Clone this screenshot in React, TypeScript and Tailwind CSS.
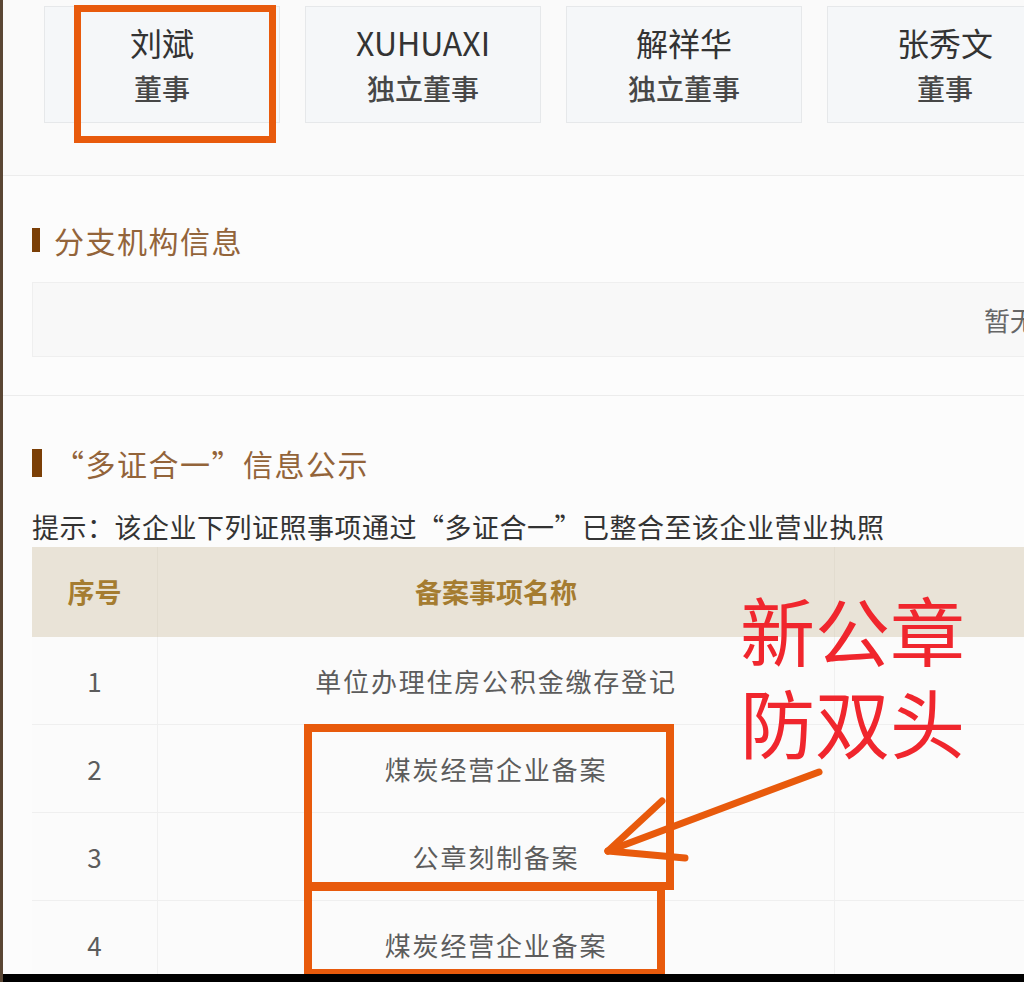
import React from "react";

const FONT = { fontFamily: '"Noto Sans CJK SC", "Noto Sans", sans-serif' };

const people = [
  { name: "刘斌", role: "董事" },
  { name: "XUHUAXI", role: "独立董事" },
  { name: "解祥华", role: "独立董事" },
  { name: "张秀文", role: "董事" },
];

const rows = [
  { no: "1", name: "单位办理住房公积金缴存登记" },
  { no: "2", name: "煤炭经营企业备案" },
  { no: "3", name: "公章刻制备案" },
  { no: "4", name: "煤炭经营企业备案" },
];

export default function App() {
  return (
    <div
      style={FONT}
      className="relative h-[982px] w-[1024px] overflow-hidden border-l-[3px] border-[#5a4634] bg-[#fafafa]"
    >
      {/* 董事卡片 */}
      <div className="h-[176px] border-b border-[#ececec] pl-[41px] pt-[6px]">
        <div className="flex gap-[25px]">
          {people.map((p) => (
            <div
              key={p.name}
              className="flex h-[117px] w-[236px] shrink-0 flex-col items-center border border-[#e6e8ea] bg-[#f5f7f9] pt-[14px]"
            >
              <span className="text-[32px] leading-[42px] text-[#333]">{p.name}</span>
              <span className="mt-[6px] text-[28px] leading-[38px] font-medium text-[#474747]">{p.role}</span>
            </div>
          ))}
        </div>
      </div>

      {/* 分支机构信息 */}
      <div className="h-[220px] border-b border-[#ececec] bg-[#fcfcfc] pl-[29px] pt-[49px]">
        <div className="flex h-[30px] items-center">
          <span className="h-[24px] w-[8px] bg-[#7b3f06]" />
          <span className="ml-[14px] text-[30px] leading-[30px] tracking-[1.5px] text-[#93643a]">分支机构信息</span>
        </div>
        <div className="mt-[27px] flex h-[75px] w-[1100px] items-center border border-[#efefef] bg-[#f8f8f8] pl-[951px]">
          <span className="whitespace-nowrap text-[26px] text-[#666]">暂无数据</span>
        </div>
      </div>

      {/* 多证合一 */}
      <div className="bg-[#fcfcfc] pl-[29px] pt-[52px]">
        <div className="flex h-[30px] items-center">
          <span className="h-[28px] w-[10px] bg-[#7b3f06]" />
          <span className="ml-[12px] text-[30px] leading-[30px] tracking-[1.5px] text-[#93643a]">“多证合一”信息公示</span>
        </div>
        <p className="mt-[31px] whitespace-nowrap text-[27px] leading-[36px] tracking-[0.5px] text-[#333]">
          提示：该企业下列证照事项通过“多证合一”已整合至该企业营业执照
        </p>
        <div className="mt-[2px] w-[1100px]">
          <div className="flex h-[90px] items-center bg-[#e9e3d7] text-[27px] font-bold text-[#a57c30]">
            <div className="flex h-full w-[126px] items-center justify-center border-r border-[#e2dccf]">序号</div>
            <div className="flex h-full w-[677px] items-center justify-center border-r border-[#e2dccf]">备案事项名称</div>
            <div className="flex-1" />
          </div>
          {rows.map((r) => (
            <div key={r.no} className="flex h-[88px] border-b border-[#efefef] bg-[#fbfbfb] text-[26px] text-[#5c5c5c]">
              <div className="flex w-[126px] items-center justify-center border-r border-[#f0f0f0]">{r.no}</div>
              <div className="flex w-[677px] items-center justify-center border-r border-[#f0f0f0] tracking-[1.8px]">{r.name}</div>
              <div className="flex-1" />
            </div>
          ))}
        </div>
      </div>

      {/* 标注 */}
      <div className="absolute left-[71px] top-[5px] h-[138px] w-[202px] border-[7px] border-[#e85a0c]" />
      <div className="absolute left-[301px] top-[724px] h-[166px] w-[370px] border-[8px] border-[#e85a0c]" />
      <div className="absolute left-[301px] top-[883px] h-[94px] w-[361px] border-[8px] border-[#e85a0c]" />
      <svg className="absolute left-0 top-0" width="1024" height="982" viewBox="0 0 1024 982">
        <g stroke="#e85a0c" strokeWidth="7" strokeLinecap="round" fill="none">
          <line x1="816" y1="772" x2="605" y2="851" />
          <line x1="659" y1="801" x2="605" y2="851" />
          <line x1="605" y1="851" x2="682" y2="858" />
        </g>
      </svg>
      <div className="absolute left-[737px] top-[583px] text-[75px] leading-[92px] text-[#f0262d]">
        新公章
        <br />
        防双头
      </div>

      <div className="absolute bottom-0 left-0 right-0 h-[8px] bg-black" />
    </div>
  );
}
